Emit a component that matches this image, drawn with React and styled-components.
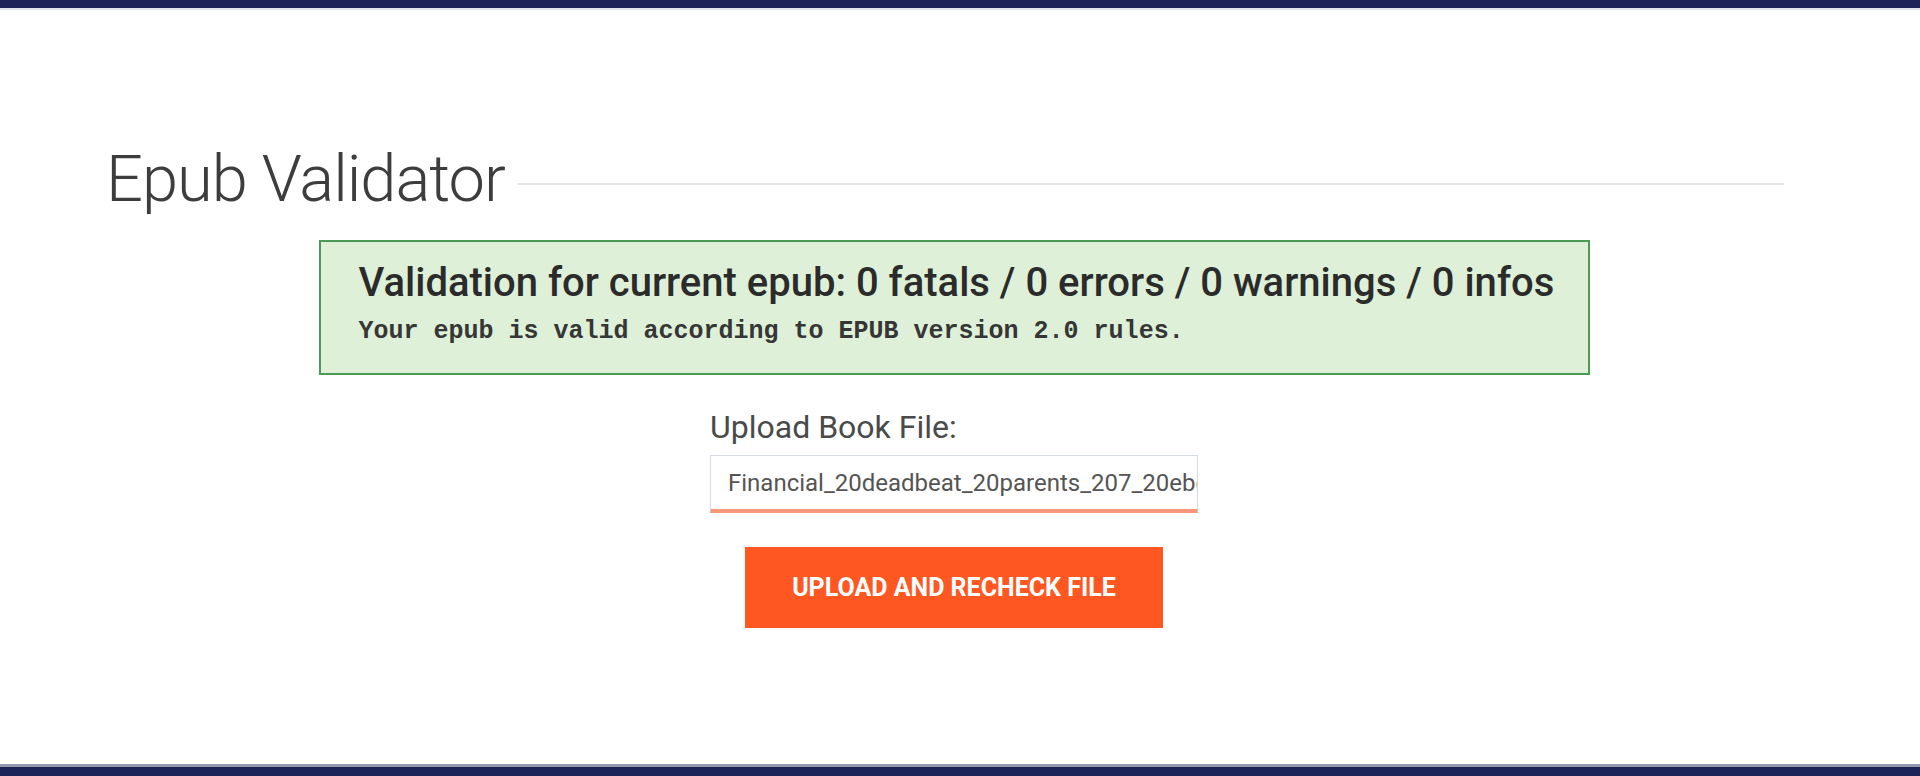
import styled, { createGlobalStyle } from 'styled-components';

const GlobalStyle = createGlobalStyle`
  html, body {
    margin: 0;
    padding: 0;
    background: #fff;
    font-family: Roboto, 'Liberation Sans', sans-serif;
  }
  * {
    box-sizing: border-box;
  }
`;

const Wrapper = styled.div`
  min-height: 100vh;
  display: flex;
  flex-direction: column;
`;

const TopBar = styled.div`
  height: 10px;
  background: #1c2359;
  border-bottom: 2px solid #e2e4ec;
`;

const Main = styled.main`
  padding: 136px 136px 0 106px;
`;

const TitleRow = styled.div`
  display: flex;
  align-items: flex-start;
  gap: 12px;
`;

const Title = styled.h1`
  margin: 0;
  font-size: 65px;
  line-height: 66px;
  font-weight: 300;
  letter-spacing: -1px;
  color: #3d3d3d;
  white-space: nowrap;
`;

const Rule = styled.div`
  flex: 1;
  height: 2px;
  margin-top: 37px;
  background: #e4e4e4;
`;

const Content = styled.div`
  display: flex;
  flex-direction: column;
  align-items: center;
  padding-left: 18px;
`;

const Alert = styled.div`
  width: 1271px;
  margin-top: 28px;
  padding: 18px 30px 27px 38px;
  background: #dff0d8;
  border: 2px solid #4c9a56;
`;

const AlertTitle = styled.h2`
  margin: 0;
  font-size: 40px;
  line-height: 46px;
  font-weight: 500;
  color: #2b2b2b;
  white-space: nowrap;
`;

const AlertText = styled.p`
  margin: 12px 0 0;
  font-family: 'Liberation Mono', 'Courier New', monospace;
  font-size: 25px;
  line-height: 28px;
  font-weight: 700;
  color: #363636;
`;

const Form = styled.form`
  width: 488px;
  margin-top: 33px;
  display: flex;
  flex-direction: column;
  align-items: center;
`;

const Label = styled.label`
  align-self: stretch;
  font-size: 32px;
  line-height: 38px;
  font-weight: 400;
  color: #4a4a4a;
`;

const FileInput = styled.input`
  width: 100%;
  height: 58px;
  margin-top: 9px;
  padding: 0 0 0 17px;
  border: 1px solid #d5dbe1;
  border-bottom: 4px solid #f9977a;
  background: #fff;
  font-family: Roboto, 'Liberation Sans', sans-serif;
  font-size: 24px;
  color: #555;
  outline: none;
`;

const Button = styled.button`
  width: 418px;
  height: 81px;
  margin-top: 34px;
  border: none;
  background: #ff5722;
  color: #fff;
  font-family: Roboto, 'Liberation Sans', sans-serif;
  font-size: 25px;
  font-weight: 700;
  text-transform: uppercase;
  cursor: pointer;
`;

const Footer = styled.footer`
  margin-top: auto;
  height: 12px;
  background: #1c2359;
  border-top: 3px solid #9298ab;
`;

export default function App() {
  return (
    <Wrapper>
      <GlobalStyle />
      <TopBar />
      <Main>
        <TitleRow>
          <Title>Epub Validator</Title>
          <Rule />
        </TitleRow>
        <Content>
          <Alert>
            <AlertTitle>
              Validation for current epub: 0 fatals / 0 errors / 0 warnings / 0 infos
            </AlertTitle>
            <AlertText>Your epub is valid according to EPUB version 2.0 rules.</AlertText>
          </Alert>
          <Form onSubmit={(e) => e.preventDefault()}>
            <Label htmlFor="book">Upload Book File:</Label>
            <FileInput
              id="book"
              readOnly
              value="Financial_20deadbeat_20parents_207_20ebook.epub"
            />
            <Button type="submit">Upload and recheck file</Button>
          </Form>
        </Content>
      </Main>
      <Footer />
    </Wrapper>
  );
}
